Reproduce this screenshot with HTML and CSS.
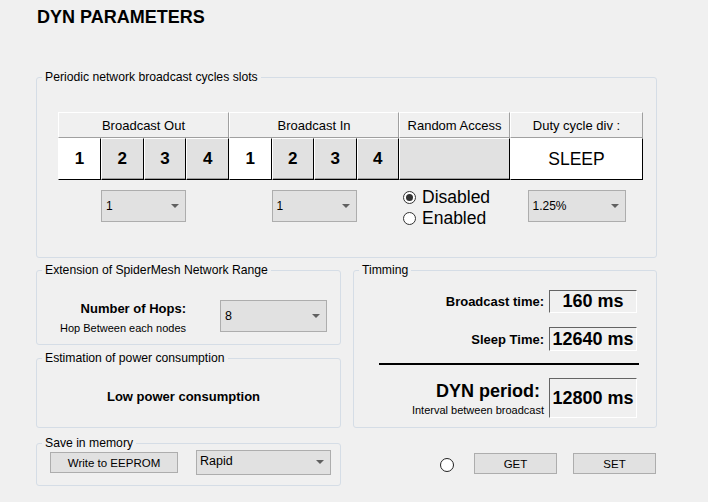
FILE: index.html
```html
<!DOCTYPE html>
<html>
<head>
<meta charset="utf-8">
<link rel="stylesheet" href="styles.css">
</head>
<body>
<div class="page">
  <h1 class="title">DYN PARAMETERS</h1>

  <fieldset class="group slots">
    <legend>Periodic network broadcast cycles slots</legend>
    <div class="slots-body">
      <div class="slot-table">
        <div class="head">Broadcast Out</div>
        <div class="head">Broadcast In</div>
        <div class="head">Random Access</div>
        <div class="head">Duty cycle div :</div>

        <div class="slot-group">
          <div class="slot num on">1</div>
          <div class="slot num">2</div>
          <div class="slot num">3</div>
          <div class="slot num">4</div>
        </div>
        <div class="slot-group">
          <div class="slot num on">1</div>
          <div class="slot num">2</div>
          <div class="slot num">3</div>
          <div class="slot num">4</div>
        </div>
        <div class="slot"></div>
        <div class="slot sleep">SLEEP</div>

        <div class="opt"><div class="select sel-slot"><span>1</span><i class="caret"></i></div></div>
        <div class="opt"><div class="select sel-slot"><span>1</span><i class="caret"></i></div></div>
        <div class="opt opt-radio">
          <div class="radios">
            <div class="radio"><span class="dot checked"></span><span>Disabled</span></div>
            <div class="radio"><span class="dot"></span><span>Enabled</span></div>
          </div>
        </div>
        <div class="opt"><div class="select sel-duty"><span>1.25%</span><i class="caret"></i></div></div>
      </div>
    </div>
  </fieldset>

  <div class="lower">
    <div class="col">
      <fieldset class="group ext">
        <legend>Extension of SpiderMesh Network Range</legend>
        <div class="ext-body">
          <div class="hops-label">
            <div class="hops-title">Number of Hops:</div>
            <div class="hops-sub">Hop Between each nodes</div>
          </div>
          <div class="select sel-hops"><span>8</span><i class="caret"></i></div>
        </div>
      </fieldset>

      <fieldset class="group power">
        <legend>Estimation of power consumption</legend>
        <div class="power-body">Low power consumption</div>
      </fieldset>

      <fieldset class="group save">
        <legend>Save in memory</legend>
        <div class="save-body">
          <div class="btn btn-eeprom">Write to EEPROM</div>
          <div class="select sel-rapid"><span>Rapid</span><i class="caret"></i></div>
        </div>
      </fieldset>
    </div>

    <div class="col">
      <fieldset class="group timing">
        <legend>Timming</legend>
        <div class="timing-body">
          <div class="trow r1">
            <div class="tlabel">Broadcast time:</div>
            <div class="tbox">160 ms</div>
          </div>
          <div class="trow r2">
            <div class="tlabel">Sleep Time:</div>
            <div class="tbox">12640 ms</div>
          </div>
          <div class="rule"></div>
          <div class="trow r3">
            <div class="tlabel big">
              <div class="dyn">DYN period:</div>
              <div class="dyn-sub">Interval between broadcast</div>
            </div>
            <div class="tbox tall">12800 ms</div>
          </div>
        </div>
      </fieldset>

      <div class="actions">
        <span class="led"></span>
        <div class="btn btn-act">GET</div>
        <div class="btn btn-act">SET</div>
      </div>
    </div>
  </div>
</div>
</body>
</html>
```

FILE: styles.css
```css
* { box-sizing: border-box; }

html, body {
  margin: 0;
  padding: 0;
  background: #f0f0f0;
}

body {
  font-family: "Liberation Sans", Arial, sans-serif;
  color: #000;
  width: 708px;
  height: 502px;
  overflow: hidden;
}

.page {
  padding: 0 51px 0 36px;
}

.title {
  margin: 0;
  padding: 6px 0 0 1px;
  font-size: 18px;
  line-height: 22px;
  font-weight: bold;
}

/* group boxes */
fieldset.group {
  margin: 0;
  padding: 0;
  border: 1px solid #d5dde6;
  border-radius: 3px;
  min-width: 0;
}

fieldset.group > legend {
  margin-left: 5px;
  padding: 0 3px;
  font-size: 12.2px;
  line-height: 15px;
}

fieldset.slots {
  margin-top: 42px;
}

.slots-body {
  height: 172px;
  padding: 27px 13px 0 21px;
}

.slot-table {
  display: grid;
  grid-template-columns: 171px 170px 111px 133px;
  grid-template-rows: 26px 42px auto;
}

.head {
  display: flex;
  align-items: center;
  justify-content: center;
  font-size: 13px;
  border-top: 1px solid #ffffff;
  border-left: 1px solid #ffffff;
  border-right: 1px solid #a0a0a0;
  border-bottom: 1px solid #a0a0a0;
  background: #f0f0f0;
}

.slot-group {
  display: grid;
  grid-template-columns: repeat(4, 1fr);
}

.slot {
  display: flex;
  align-items: center;
  justify-content: center;
  background: #e1e1e1;
  border-top: 1px solid #ffffff;
  border-left: 1px solid #ffffff;
  border-right: 1px solid #000;
  border-bottom: 1px solid #000;
  box-shadow: inset 0 -1px 0 #a0a0a0;
}

.slot.num {
  font-size: 17px;
  font-weight: bold;
}

.slot.on {
  background: #ffffff;
  box-shadow: none;
}

.slot.sleep {
  background: #ffffff;
  font-size: 17.5px;
  box-shadow: none;
}

.opt {
  display: flex;
  justify-content: center;
  align-items: flex-start;
  padding-top: 10px;
  height: 78px;
}

.opt-radio {
  justify-content: flex-start;
  padding-left: 4px;
  padding-top: 7px;
}

/* select look-alike */
.select {
  display: flex;
  align-items: center;
  justify-content: space-between;
  background: #e1e1e1;
  border: 1px solid #adadad;
  font-size: 12px;
  padding: 0 6px 0 4px;
}

.caret {
  display: block;
  width: 0;
  height: 0;
  border-left: 4px solid transparent;
  border-right: 4px solid transparent;
  border-top: 4px solid #606060;
}

.sel-slot { width: 85px; height: 32px; }
.sel-duty { width: 98px; height: 32px; }
.sel-hops { width: 107px; height: 32px; font-size: 12.5px; }
.sel-rapid { width: 135px; height: 25px; font-size: 12.5px; padding-left: 3px; align-items: flex-start; padding-top: 3px; }
.sel-rapid .caret { margin-top: 6px; }

/* radios */
.radios {
  display: flex;
  flex-direction: column;
}

.radio {
  display: flex;
  align-items: center;
  gap: 6px;
  height: 21px;
  font-size: 17.5px;
}

.dot {
  width: 13px;
  height: 13px;
  border-radius: 50%;
  border: 1px solid #333;
  background: #fff;
  display: flex;
  align-items: center;
  justify-content: center;
}

.dot.checked::after {
  content: "";
  width: 7px;
  height: 7px;
  border-radius: 50%;
  background: #333;
}

/* lower section */
.lower {
  display: grid;
  grid-template-columns: 305px 304px;
  column-gap: 12px;
  margin-top: 5px;
}

.col {
  display: flex;
  flex-direction: column;
}

.ext-body {
  height: 66px;
  display: flex;
  align-items: flex-start;
  padding: 22px 0 0 0;
}

.hops-label {
  width: 149px;
  text-align: right;
  margin-top: 1px;
}

.hops-title {
  font-size: 13px;
  font-weight: bold;
  line-height: 15px;
}

.hops-sub {
  font-size: 11px;
  line-height: 13px;
  margin-top: 6px;
}

.sel-hops {
  margin-left: 34px;
}

fieldset.power {
  margin-top: 6px;
}

.power-body {
  height: 61px;
  display: flex;
  align-items: center;
  justify-content: center;
  padding: 0 10px 0 0;
  font-size: 13px;
  font-weight: bold;
}

fieldset.save {
  margin-top: 8px;
}

.save-body {
  height: 35px;
  display: flex;
  align-items: center;
  padding: 0 0 0 13px;
  margin-top: -1px;
}

.save-body .select { align-self: flex-start; }
.save-body .btn { align-self: flex-start; margin-top: 2px; }

.btn {
  display: flex;
  align-items: center;
  justify-content: center;
  background: #e1e1e1;
  border: 1px solid #adadad;
  font-size: 11.5px;
  height: 21px;
}

.btn-eeprom {
  width: 128px;
  margin-right: 18px;
}

.timing-body {
  height: 149px;
  padding: 12px 19px 0 0;
  display: flex;
  flex-direction: column;
}

.trow {
  display: flex;
  justify-content: flex-end;
  align-items: center;
  gap: 5px;
}

.tlabel {
  font-size: 13px;
  font-weight: bold;
  text-align: right;
}

.tbox {
  width: 88px;
  height: 23px;
  display: flex;
  align-items: center;
  justify-content: center;
  border-top: 1px solid #646464;
  border-left: 1px solid #646464;
  border-right: 1px solid #ffffff;
  border-bottom: 1px solid #ffffff;
  font-size: 18px;
  font-weight: bold;
  white-space: nowrap;
}

.r2 { margin-top: 14px; }
.r2 .tbox { height: 24px; }

.rule {
  height: 2px;
  background: #000;
  margin: 12px -2px 0 25px;
}

.r3 {
  margin-top: 13px;
  align-items: stretch;
}

.tbox.tall {
  height: 40px;
}

.tlabel.big {
  display: flex;
  flex-direction: column;
  align-items: flex-end;
  padding-right: 4px;
}

.dyn {
  font-size: 18px;
  line-height: 22px;
  margin-top: 2px;
}

.dyn-sub {
  font-size: 11px;
  font-weight: normal;
  line-height: 13px;
  margin-top: 2px;
  margin-right: -4px;
}

.actions {
  display: flex;
  justify-content: flex-end;
  align-items: center;
  margin-top: 25px;
  padding-right: 1px;
}

.led {
  width: 14px;
  height: 14px;
  border-radius: 50%;
  border: 1px solid #222;
  background: #fff;
  margin-right: 20px;
  margin-top: 2px;
}

.btn-act {
  width: 83px;
}

.btn-act + .btn-act {
  margin-left: 16px;
}
```
